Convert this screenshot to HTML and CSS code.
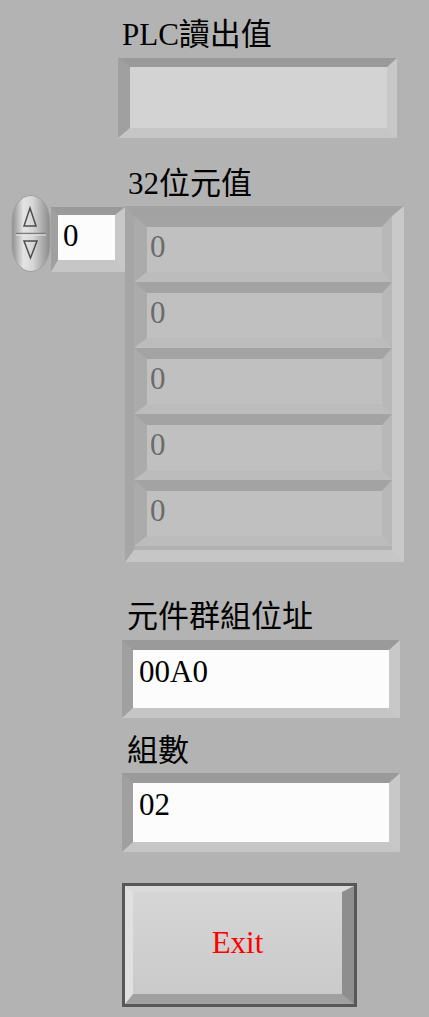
FILE: index.html
```html
<!DOCTYPE html>
<html>
<head>
<meta charset="utf-8">
<link rel="stylesheet" href="styles.css">
</head>
<body>
<div class="panel">
  <div class="label l1">PLC讀出值</div>
  <div class="frame box1"><div class="well grey"></div></div>

  <div class="array-row">
    <div class="index-ctl">
      <svg class="spin" width="40" height="77" viewBox="0 0 40 77">
        <defs>
          <linearGradient id="pg" x1="0" x2="1" y1="0" y2="0">
            <stop offset="0" stop-color="#8e8e8e"/>
            <stop offset="0.3" stop-color="#e4e4e4"/>
            <stop offset="0.55" stop-color="#d6d6d6"/>
            <stop offset="1" stop-color="#8a8a8a"/>
          </linearGradient>
        </defs>
        <rect x="1" y="0.5" width="38" height="76" rx="19" ry="26" fill="url(#pg)" stroke="#a0a0a0"/>
        <line x1="5" y1="38.5" x2="35" y2="38.5" stroke="#7c7c7c" stroke-width="1.5"/>
        <line x1="5" y1="40" x2="35" y2="40" stroke="#ececec" stroke-width="1"/>
        <path d="M19 13 L25 31 L13 31 Z" fill="none" stroke="#4e4e4e" stroke-width="1.5"/>
        <path d="M13 46 L26 46 L19.5 63 Z" fill="none" stroke="#4e4e4e" stroke-width="1.5"/>
      </svg>
      <div class="frame idx"><div class="well white txt">0</div></div>
    </div>
    <div class="array-col">
      <div class="label l2">32位元值</div>
      <div class="array-frame">
        <div class="elem"><div class="elem-in">0</div></div>
        <div class="elem"><div class="elem-in">0</div></div>
        <div class="elem"><div class="elem-in">0</div></div>
        <div class="elem"><div class="elem-in">0</div></div>
        <div class="elem"><div class="elem-in">0</div></div>
      </div>
    </div>
  </div>

  <div class="label l3">元件群組位址</div>
  <div class="frame box2"><div class="well white txt">00A0</div></div>

  <div class="label l4">組數</div>
  <div class="frame box3"><div class="well white txt">02</div></div>

  <div class="btn"><div class="btn-bevel"><div class="btn-face">Exit</div></div></div>
</div>
</body>
</html>
```

FILE: styles.css
```css
html, body {
  margin: 0;
  padding: 0;
}
body {
  background: #b3b3b3;
  width: 429px;
  height: 1017px;
  overflow: hidden;
  font-family: "Liberation Serif", "Noto Sans CJK TC", serif;
  font-size: 31px;
  line-height: 34px;
  color: #000;
}
.panel {
  display: flex;
  flex-direction: column;
  align-items: flex-start;
  padding-top: 18px;
}
.label {
  height: 34px;
  line-height: 34px;
  white-space: nowrap;
}
.l1 { margin-left: 122px; }
.l2 { padding-left: 3px; }
.l3 { margin-left: 127px; margin-top: 38px; }
.l4 { margin-left: 127px; margin-top: 16px; }

.frame {
  border-style: solid;
  border-color: #9a9a9a #c8c8c8 #c6c6c6 #a0a0a0;
}
.well { box-sizing: border-box; }
.grey { background: #d3d3d3; }
.white { background: #fcfcfc; }
.txt {
  padding: 5px 0 0 6px;
  line-height: 34px;
}

.box1 {
  margin-left: 118px;
  margin-top: 6px;
  border-width: 9px 10px 10px 12px;
}
.box1 .well { width: 257px; height: 61px; }

.box2 {
  margin-left: 122px;
  margin-top: 6px;
  border-width: 10px 11px 10px 11px;
}
.box2 .well { width: 256px; height: 58px; }

.box3 {
  margin-left: 122px;
  margin-top: 5px;
  border-width: 10px 11px 10px 11px;
}
.box3 .well { width: 256px; height: 59px; }

.array-row {
  display: flex;
  align-items: flex-start;
  margin-top: 29px;
  margin-left: 11px;
}
.index-ctl {
  display: flex;
  align-items: flex-start;
  margin-top: 28px;
}
.spin { display: block; }
.idx {
  margin-top: 12px;
  border-width: 8px 10px 12px 7px;
}
.idx .well {
  width: 57px;
  height: 45px;
  padding: 4px 0 0 5px;
}

.array-frame {
  margin-top: 5px;
  border-style: solid;
  border-width: 10px 12px 12px 9px;
  border-color: #a2a2a2 #c9c9c9 #c6c6c6 #a6a6a6;
  background: #b1b1b1;
  padding-bottom: 4px;
}
.elem {
  border-style: solid;
  border-width: 11px 10px 10px 13px;
  border-color: #a3a3a3 #b8b8b8 #bcbcbc #ababab;
}
.elem-in {
  box-sizing: border-box;
  width: 235px;
  height: 45px;
  background: #c0c0c0;
  color: #6b6b6b;
  padding: 3px 0 0 3px;
}

.btn {
  margin-left: 122px;
  margin-top: 31px;
  border: 3px solid #575757;
}
.btn-bevel {
  border-style: solid;
  border-width: 6px 12px 10px 8px;
  border-color: #dadada #8e8e8e #a0a0a0 #e0e0e0;
}
.btn-face {
  width: 209px;
  height: 102px;
  display: flex;
  align-items: center;
  justify-content: center;
  background: linear-gradient(#d6d6d6, #cacaca);
  color: #ff0000;
}
```
